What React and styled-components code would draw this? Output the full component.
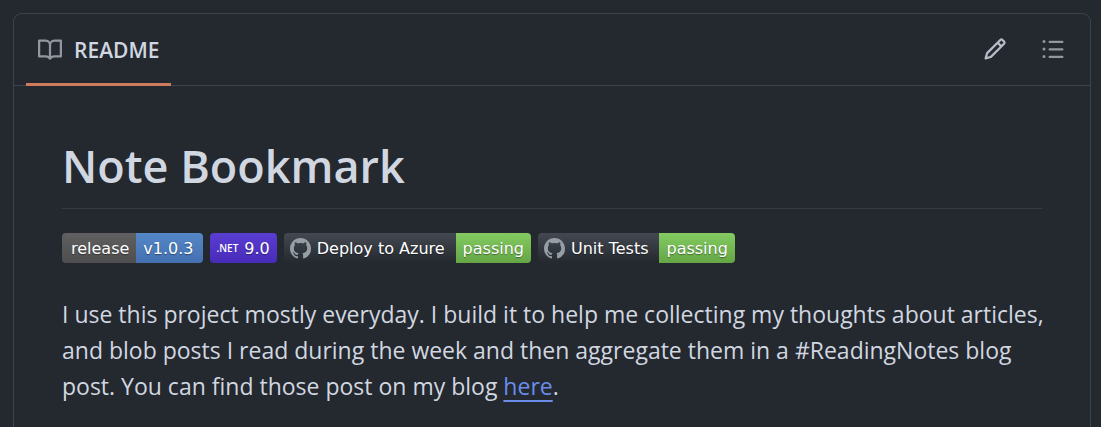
import React from "react";
import styled, { createGlobalStyle } from "styled-components";

const GlobalStyle = createGlobalStyle`
  *,
  *::before,
  *::after {
    box-sizing: border-box;
  }
  html {
    background: #24282f;
  }
  body {
    margin: 0;
    color: #d1d7e0;
    font-family: "Open Sans", "Noto Sans", sans-serif;
  }
`;

const icons = {
  book: "M0 1.75A.75.75 0 0 1 .75 1h4.253c1.227 0 2.317.59 3 1.501A3.743 3.743 0 0 1 11.006 1h4.245a.75.75 0 0 1 .75.75v10.5a.75.75 0 0 1-.75.75h-4.507a2.25 2.25 0 0 0-1.591.659l-.622.621a.75.75 0 0 1-1.06 0l-.622-.621A2.25 2.25 0 0 0 5.258 13H.75a.75.75 0 0 1-.75-.75Zm7.251 10.324.004-5.073-.002-2.253A2.25 2.25 0 0 0 5.003 2.5H1.5v9h3.757a3.75 3.75 0 0 1 1.994.574ZM8.755 4.75l-.004 7.322a3.752 3.752 0 0 1 1.992-.572H14.5v-9h-3.495a2.25 2.25 0 0 0-2.25 2.25Z",
  pencil:
    "M11.013 1.427a1.75 1.75 0 0 1 2.474 0l1.086 1.086a1.75 1.75 0 0 1 0 2.474l-8.61 8.61c-.21.21-.47.364-.756.445l-3.251.93a.75.75 0 0 1-.927-.928l.929-3.25c.081-.286.235-.547.445-.758l8.61-8.61Zm.176 4.823L9.75 4.81l-6.286 6.287a.253.253 0 0 0-.064.108l-.558 1.953 1.953-.558a.253.253 0 0 0 .108-.064Zm1.238-3.763a.25.25 0 0 0-.354 0L10.811 3.75l1.439 1.44 1.263-1.263a.25.25 0 0 0 0-.354Z",
  list: "M5.75 2.5h8.5a.75.75 0 0 1 0 1.5h-8.5a.75.75 0 0 1 0-1.5Zm0 5h8.5a.75.75 0 0 1 0 1.5h-8.5a.75.75 0 0 1 0-1.5Zm0 5h8.5a.75.75 0 0 1 0 1.5h-8.5a.75.75 0 0 1 0-1.5ZM2 14a1 1 0 1 1 0-2 1 1 0 0 1 0 2Zm1-6a1 1 0 1 1-2 0 1 1 0 0 1 2 0ZM2 4a1 1 0 1 1 0-2 1 1 0 0 1 0 2Z",
  github:
    "M8 0C3.58 0 0 3.58 0 8c0 3.54 2.29 6.53 5.47 7.59.4.07.55-.17.55-.38 0-.19-.01-.82-.01-1.49-2.01.37-2.53-.49-2.69-.94-.09-.23-.48-.94-.82-1.13-.28-.15-.68-.52-.01-.53.63-.01 1.08.58 1.23.82.72 1.21 1.87.87 2.33.66.07-.52.28-.87.51-1.07-1.78-.2-3.64-.89-3.64-3.95 0-.87.31-1.59.82-2.15-.08-.2-.36-1.02.08-2.12 0 0 .67-.21 2.2.82.64-.18 1.32-.27 2-.27s1.36.09 2 .27c1.53-1.04 2.2-.82 2.2-.82.44 1.1.16 1.92.08 2.12.51.56.82 1.27.82 2.15 0 3.07-1.87 3.75-3.65 3.95.29.25.54.73.54 1.48 0 1.07-.01 1.93-.01 2.2 0 .21.15.46.55.38A8.01 8.01 0 0 0 16 8c0-4.42-3.58-8-8-8Z",
};

function Icon({ name, size = 24 }) {
  return (
    <svg
      width={size}
      height={size}
      viewBox="0 0 16 16"
      fill="currentColor"
      aria-hidden="true"
    >
      <path d={icons[name]} />
    </svg>
  );
}

function WorkflowBadge({ name }) {
  return (
    <Badge href="#">
      <WorkflowName>
        <Icon name="github" size={21} />
        {name}
      </WorkflowName>
      <BadgePart $color="#83cb61, #65a545">passing</BadgePart>
    </Badge>
  );
}

function App() {
  return (
    <>
      <GlobalStyle />
      <Page>
        <Panel>
          <Header>
            <Tab href="#">
              <Icon name="book" />
              README
            </Tab>
            <Actions>
              <IconButton type="button" aria-label="Edit file" $bright>
                <Icon name="pencil" />
              </IconButton>
              <IconButton type="button" aria-label="Outline">
                <Icon name="list" />
              </IconButton>
            </Actions>
          </Header>
          <Article>
            <Title>Note Bookmark</Title>
            <Badges>
              <Badge href="#">
                <ReleaseLabel>release</ReleaseLabel>
                <VersionPart $color="#5587c6, #4470b0">v1.0.3</VersionPart>
              </Badge>
              <Badge href="#">
                <DotnetBadge>
                  <small>.NET</small>
                  9.0
                </DotnetBadge>
              </Badge>
              <WorkflowBadge name="Deploy to Azure" />
              <WorkflowBadge name="Unit Tests" />
            </Badges>
            <Text>
              I use this project mostly everyday. I build it to help me
              collecting my thoughts about articles, and blob posts I read
              during the week and then aggregate them in a #ReadingNotes blog
              post. You can find those post on my blog <a href="#">here</a>.
            </Text>
          </Article>
        </Panel>
      </Page>
    </>
  );
}

const Page = styled.main`
  display: flex;
  min-height: 100vh;
  padding: 13px 10px 0 13px;
`;

const Panel = styled.section`
  flex: 1;
  border: 1px solid #3d444d;
  border-bottom: 0;
  border-radius: 9px 9px 0 0;
`;

const Header = styled.header`
  display: flex;
  justify-content: space-between;
  height: 72px;
  padding: 0 16px 0 12px;
  border-bottom: 1px solid #3d444d;
`;

const Tab = styled.a`
  display: flex;
  align-items: center;
  gap: 12px;
  height: 72px;
  padding: 3px 12px 0;
  border-bottom: 3px solid #cd7b5c;
  color: #d1d7e0;
  font-size: 21px;
  font-weight: 600;
  text-decoration: none;
  svg {
    color: #9198a1;
  }
`;

const Actions = styled.div`
  display: flex;
  align-items: center;
  gap: 16px;
  padding-bottom: 2px;
`;

const IconButton = styled.button`
  display: flex;
  align-items: center;
  justify-content: center;
  width: 42px;
  height: 42px;
  padding: 0;
  border: 0;
  border-radius: 9px;
  background: transparent;
  color: ${({ $bright }) => ($bright ? "#b7bdc8" : "#9198a1")};
  cursor: pointer;
`;

const Article = styled.article`
  padding: 48px 48px 16px;
`;

const Title = styled.h1`
  margin: 0 0 24px;
  padding: 2px 0 12px;
  border-bottom: 1px solid #373c44;
  font-size: 45px;
  font-weight: 600;
  line-height: 60px;
`;

const Badges = styled.div`
  display: flex;
  flex-wrap: wrap;
  gap: 7px;
  margin-bottom: 33px;
`;

const Badge = styled.a`
  display: flex;
  height: 30px;
  border-radius: 4px;
  overflow: hidden;
  color: #fff;
  font-family: "DejaVu Sans", Verdana, sans-serif;
  font-size: 16px;
  text-decoration: none;
  text-shadow: 0 1px 1px rgba(1, 1, 1, 0.4);
`;

const BadgePart = styled.span`
  display: flex;
  align-items: center;
  padding: 0 7px;
  background: linear-gradient(${({ $color }) => $color});
`;

const VersionPart = styled(BadgePart)`
  padding: 0 9px 0 7px;
`;

const ReleaseLabel = styled(BadgePart)`
  padding-left: 9px;
  background: linear-gradient(#606060, #4e4e4e);
`;

const DotnetBadge = styled(BadgePart)`
  gap: 6px;
  background: linear-gradient(#5a3dd2, #472bb8);
  small {
    font-family: "Open Sans", sans-serif;
    font-size: 10px;
    font-weight: 600;
    text-shadow: none;
  }
`;

const WorkflowName = styled(BadgePart)`
  gap: 6px;
  padding: 0 11px 0 6px;
  background: linear-gradient(#444951, #24282f);
  svg {
    color: #959da5;
  }
`;

/* runs slightly past the column so the long first line stays whole */
const Text = styled.p`
  margin: 0 -8px 0 0;
  font-size: 23px;
  line-height: 36px;
  a {
    color: #6a8dea;
    text-decoration: underline;
    text-decoration-thickness: 2px;
    text-underline-offset: 5px;
  }
`;

export default App;
